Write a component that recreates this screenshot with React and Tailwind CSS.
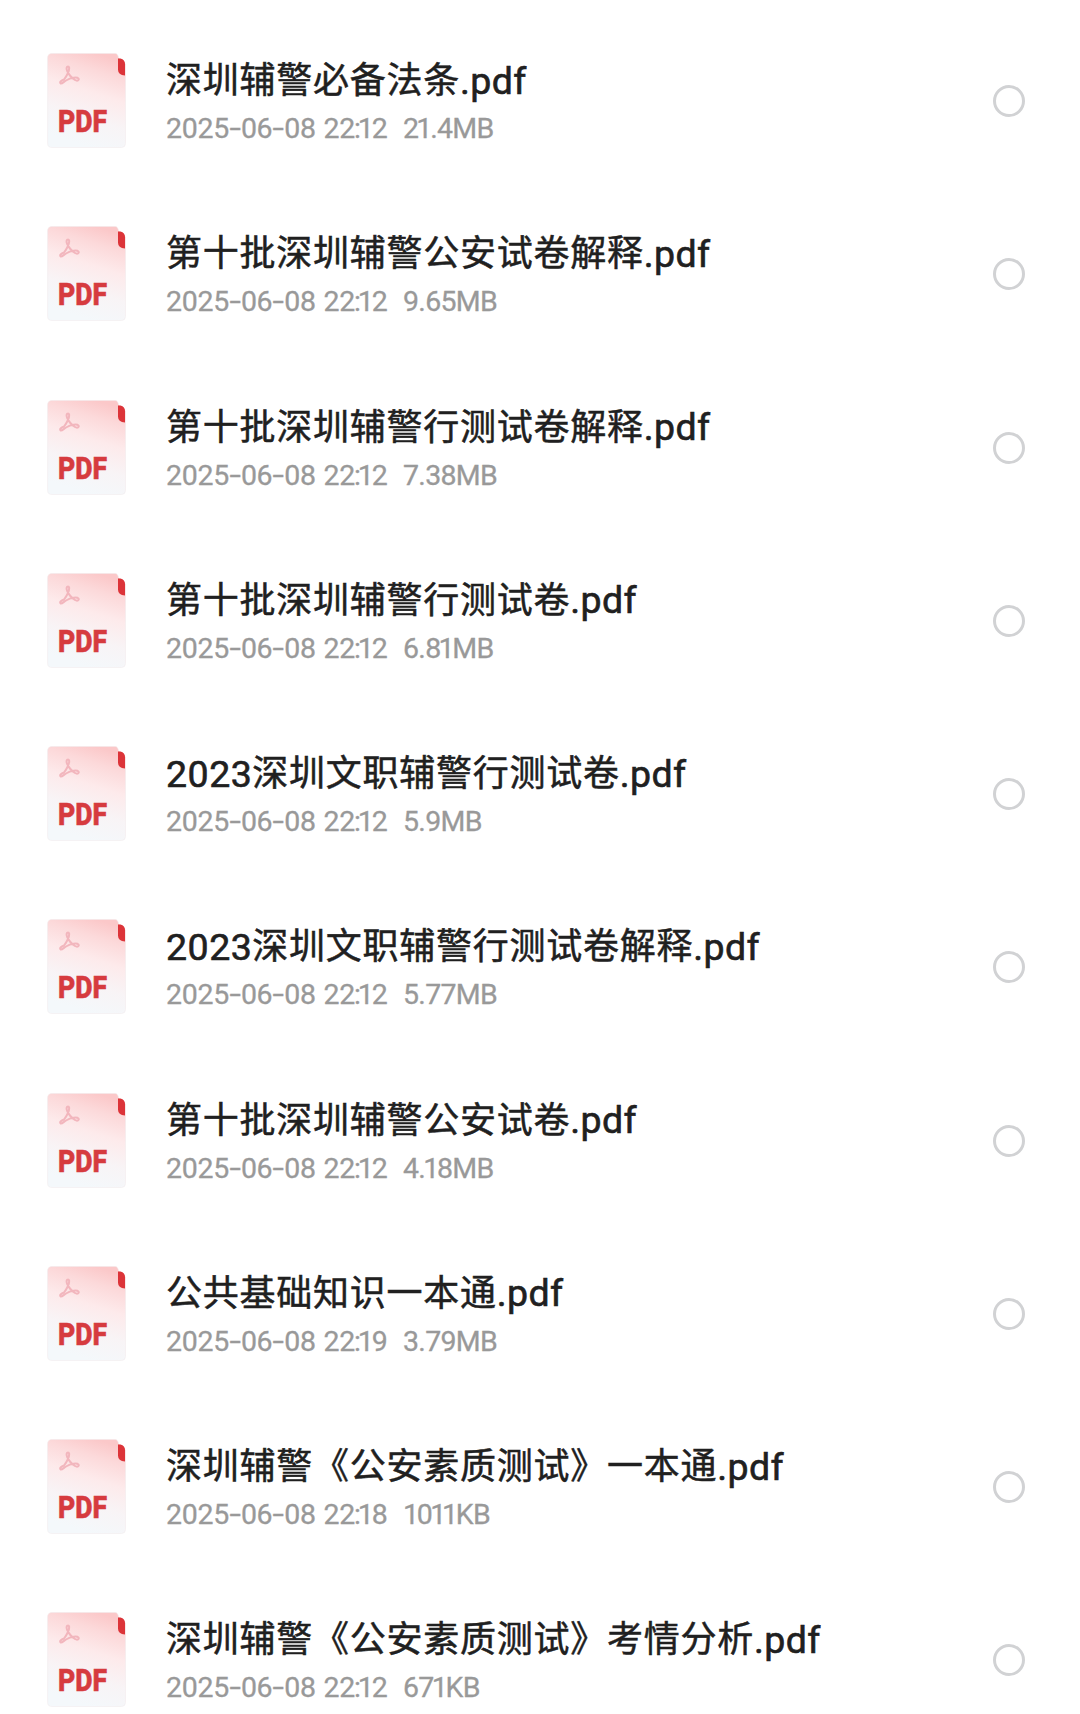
const files = [
  { name: '深圳辅警必备法条', time: '22:12', size: '21.4MB' },
  { name: '第十批深圳辅警公安试卷解释', time: '22:12', size: '9.65MB' },
  { name: '第十批深圳辅警行测试卷解释', time: '22:12', size: '7.38MB' },
  { name: '第十批深圳辅警行测试卷', time: '22:12', size: '6.81MB' },
  { year: '2023', name: '深圳文职辅警行测试卷', time: '22:12', size: '5.9MB' },
  { year: '2023', name: '深圳文职辅警行测试卷解释', time: '22:12', size: '5.77MB' },
  { name: '第十批深圳辅警公安试卷', time: '22:12', size: '4.18MB' },
  { name: '公共基础知识一本通', time: '22:19', size: '3.79MB' },
  { name: '深圳辅警《公安素质测试》一本通', time: '22:18', size: '1011KB' },
  { name: '深圳辅警《公安素质测试》考情分析', time: '22:12', size: '671KB' },
];

function PdfIcon() {
  return (
    <svg className="mt-[-1px] h-[96px] w-[80px] shrink-0" viewBox="0 0 80 96" fill="none">
      <defs>
        <linearGradient id="paper" x1="58" y1="3" x2="30" y2="90" gradientUnits="userSpaceOnUse">
          <stop offset="0" stopColor="#fbc8c9" />
          <stop offset="0.18" stopColor="#fcd9da" />
          <stop offset="0.42" stopColor="#fdeaeb" />
          <stop offset="0.7" stopColor="#f8f4f6" />
          <stop offset="1" stopColor="#f4f8fb" />
        </linearGradient>
      </defs>
      <path
        d="M5 .5H68Q71 .5 71.500 5L78.500 11V90.500Q78.500 94.500 74.500 94.500H5Q.6 94.500 .6 90.500V5Q.6 .5 5 .5Z"
        fill="url(#paper)"
        stroke="#f0e9eb"
        strokeWidth=".5"
      />
      <path d="M71 5.500H73.500Q78 6.500 78 11V22.500Q71 22 71 16.500Z" fill="#dc3439" />
      <path
        d="M21 13.500C19.500 13.500 19.200 15.500 20 17.500C21.500 21 24 24.500 28 27C30.500 28.500 32.500 27 31.500 25.500C30 23.500 24 24.500 19 27.500C16.500 29 15 31 13.700 30.500C12.200 29.500 14 27.500 17 26.500C19 24 22.500 18 22.200 15C22 13.800 21.500 13.500 21 13.500Z"
        stroke="#f2b6bd"
        strokeWidth="2"
      />
      <text
        x="11"
        y="78.5"
        textLength="49"
        lengthAdjust="spacingAndGlyphs"
        fill="#d63b3f"
        stroke="#d63b3f"
        strokeWidth=".6"
        fontFamily="Roboto, sans-serif"
        fontWeight="800"
        fontSize="31"
      >
        PDF
      </text>
    </svg>
  );
}

function Dash() {
  return <span className="inline-block w-[12px] -translate-y-px scale-x-[1.45] text-center">-</span>;
}

// The digit 1 and the colon are set narrower than the other figures.
function Figures({ text }) {
  return [...text].map((char, i) => {
    if (char === '1') return <span key={i} className="-ml-[2px] -mr-[1.5px] first:ml-0">1</span>;
    if (char === ':') return <span key={i} className="-mx-[0.8px]">:</span>;
    return <span key={i}>{char}</span>;
  });
}

function FileRow({ file }) {
  return (
    <li className="flex h-[173.25px] items-start pl-[47px] pr-[55px]">
      <PdfIcon />
      <div className="ml-[39px] flex-1 whitespace-nowrap">
        <div className="flex h-[53px] items-center text-[#202020]">
          {file.year && (
            <span className="font-['Roboto'] text-[37.5px] font-normal leading-[52px] tracking-[0.5px] [-webkit-text-stroke:0.6px_#202020]">
              {file.year}
            </span>
          )}
          <span className="mt-[-7px] font-['Noto_Sans_CJK_SC',sans-serif] text-[36px] font-normal leading-[52px] tracking-[0.75px] [-webkit-text-stroke:0.5px_#202020]">
            {file.name}
          </span>
          <span className="font-['Roboto'] text-[37.5px] font-normal leading-[52px] tracking-[0.4px] [-webkit-text-stroke:0.6px_#202020]">
            .pdf
          </span>
        </div>
        <div className="flex h-[44px] font-['Roboto'] text-[28.5px] leading-[44px] text-[#999999] [-webkit-text-stroke:0.3px_#999999]">
          <span className="w-[157.500px] tracking-[-0.3px]">
            2025<Dash />06<Dash />08
          </span>
          <span className="w-[79.500px] tracking-[-0.4px]"><Figures text={file.time} /></span>
          <span className="tracking-[-0.7px]"><Figures text={file.size} /></span>
        </div>
      </div>
      <span className="mt-[31px] size-[32px] rounded-full border-[3px] border-[#d1d2d4]" />
    </li>
  );
}

export default function App() {
  return (
    <main className="h-[1714px] w-[1080px] overflow-hidden bg-white pt-[54px]">
      <ul>
        {files.map((file) => (
          <FileRow key={(file.year || '') + file.name} file={file} />
        ))}
      </ul>
    </main>
  );
}
